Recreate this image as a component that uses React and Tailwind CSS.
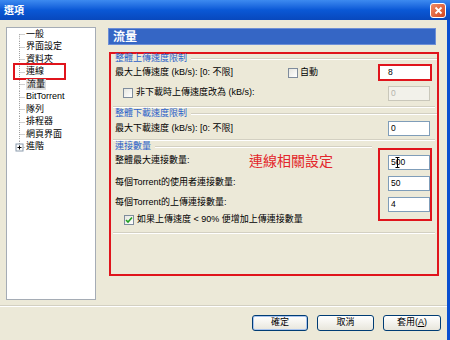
import React from "react";

const treeItems = ["一般", "界面設定", "資料夾", "連線", "流量", "BitTorrent", "隊列", "排程器", "網頁界面", "進階"];

function TreeLine({ first, last, plus }) {
  return (
    <svg width="12" height="12.5" viewBox="0 0 12 12.5" className="shrink-0">
      <line
        x1="6.5"
        y1={first ? 6.25 : 0}
        x2="6.5"
        y2={last ? 6.25 : 12.5}
        stroke="#a0a0a0"
        strokeWidth="1"
        strokeDasharray="1 1"
      />
      <line x1="6.5" y1="6.5" x2="12" y2="6.5" stroke="#a0a0a0" strokeWidth="1" strokeDasharray="1 1" />
      {plus ? (
        <g>
          <rect x="3" y="3" width="7" height="7" fill="#fff" stroke="#8c9cad" />
          <line x1="4.5" y1="6.5" x2="8.5" y2="6.5" stroke="#000" />
          <line x1="6.5" y1="4.5" x2="6.5" y2="8.5" stroke="#000" />
        </g>
      ) : null}
    </svg>
  );
}

function Checkbox({ checked }) {
  return (
    <span className="flex h-[10px] w-[10px] shrink-0 items-center justify-center border border-[#7f8c9c] bg-gradient-to-br from-[#e6e6e0] to-white">
      {checked ? (
        <svg width="8" height="8" viewBox="0 0 8 8">
          <path d="M1 4 L3 6 L7 1.5" fill="none" stroke="#21a121" strokeWidth="1.6" />
        </svg>
      ) : null}
    </span>
  );
}

function Field({ value, disabled, children }) {
  return (
    <div
      className={`relative flex h-[15px] w-[42px] items-center border pl-[2px] text-[8.5px] ${
        disabled ? "border-[#c9c7ba] bg-[#f2f1ea] text-[#b5b4ac]" : "border-[#7f9db9] bg-white text-black"
      }`}
    >
      {value}
      {children}
    </div>
  );
}

function Heading({ text }) {
  return (
    <div className="flex h-[9px] items-center gap-[4px]">
      <span className="leading-[9px] text-[#2a5fc9]">{text}</span>
      <span className="h-[2px] flex-1 border-t border-b border-t-[#d3d0c2] border-b-white" />
    </div>
  );
}

function Separator() {
  return <div className="h-[2px] border-t border-b border-t-[#d3d0c2] border-b-white" />;
}

export default function App() {
  return (
    <div className="flex h-[340px] w-[450px] flex-col overflow-hidden font-['Liberation_Sans','Noto_Sans_CJK_TC',sans-serif] text-[9px] text-black">
      {/* title bar */}
      <div className="flex h-[20px] shrink-0 items-center justify-between bg-gradient-to-b from-[#3d8af0] via-[#0a58d6] to-[#0848bd] pl-[4px] pr-[4px]">
        <span className="text-[10px] font-bold text-white">選項</span>
        <div className="flex h-[15px] w-[16px] items-center justify-center rounded-[3px] border border-white bg-gradient-to-br from-[#f08a64] to-[#d2451d]">
          <svg width="9" height="9" viewBox="0 0 9 9">
            <path d="M1.5 1.5 L7.5 7.5 M7.5 1.5 L1.5 7.5" stroke="#fff" strokeWidth="1.8" />
          </svg>
        </div>
      </div>

      <div className="flex flex-1 flex-col border-r-[3px] border-r-[#0a4fd0] bg-[#ece9d8]">
        <div className="flex pl-[6px] pt-[7px]">
          {/* tree */}
          <div className="h-[273px] w-[90px] border border-[#a5acb5] bg-white pl-[6px]">
            {treeItems.map((item, i) => (
              <div key={item} className="flex h-[12.5px] items-center">
                <TreeLine first={i === 0} last={i === treeItems.length - 1} plus={item === "進階"} />
                <span
                  className={`relative ml-[1px] whitespace-nowrap leading-[11px] ${
                    item === "流量" ? "bg-[#dedede] px-[1px]" : ""
                  }`}
                >
                  {item}
                  {item === "連線" ? (
                    <span className="absolute -left-[13px] -top-[3px] h-[17px] w-[53px] border-2 border-[#e0141c]" />
                  ) : null}
                </span>
              </div>
            ))}
          </div>

          {/* right panel */}
          <div className="ml-[12px] w-[331px]">
            <div className="mt-[1px] flex h-[17px] w-[328px] items-center border border-[#6d8fd6] bg-[#3566c5] pl-[4px]">
              <span className="text-[12px] font-bold leading-[14px] text-white">流量</span>
            </div>

            <div className="ml-[1px] mt-[7px] flex h-[224px] w-[330px] flex-col border-2 border-[#e0141c] pl-[4px]">
              <Heading text="整體上傳速度限制" />
              <div className="mt-[1px] flex h-[17px] items-center pr-[5px]">
                <span className="w-[173px] shrink-0">最大上傳速度 (kB/s): [0: 不限]</span>
                <Checkbox />
                <span className="ml-[2px]">自動</span>
                <div className="ml-auto flex h-[17px] w-[54px] items-center border-2 border-[#e0141c] bg-white pl-[8px] text-[8.5px]">
                  8
                </div>
              </div>
              <div className="mt-[4px] flex h-[16px] items-center pl-[8px] pr-[7px]">
                <Checkbox />
                <span className="ml-[3px]">非下載時上傳速度改為 (kB/s):</span>
                <div className="ml-auto">
                  <Field value="0" disabled />
                </div>
              </div>

              <div className="mt-[5px] -ml-[2px] mr-[2px]">
                <Separator />
              </div>
              <div className="mt-[1px]">
                <Heading text="整體下載速度限制" />
              </div>
              <div className="mt-[3px] flex h-[15px] items-center pr-[7px]">
                <span>最大下載速度 (kB/s): [0: 不限]</span>
                <div className="ml-auto">
                  <Field value="0" />
                </div>
              </div>

              <div className="mt-[3px] -ml-[2px] mr-[2px]">
                <Separator />
              </div>

              <div className="mt-[1px] flex pr-[5px]">
                <div className="flex flex-1 flex-col">
                  <Heading text="連接數量" />
                  <div className="flex h-[20px] items-center">
                    <span className="w-[134px] shrink-0">整體最大連接數量:</span>
                    <span className="text-[14px] leading-[20px] text-[#e3262b]">連線相關設定</span>
                  </div>
                  <div className="mt-[6px] flex h-[12px] items-center">每個Torrent的使用者連接數量:</div>
                  <div className="mt-[8px] flex h-[12px] items-center">每個Torrent的上傳連接數量:</div>
                  <div className="mt-[5px] flex h-[12px] items-center pl-[9px]">
                    <Checkbox checked />
                    <span className="ml-[3px]">如果上傳速度 &lt; 90% 便增加上傳連接數量</span>
                  </div>
                </div>
                <div className="ml-[6px] mt-[6px] flex h-[73px] w-[54px] flex-col gap-[6px] border-2 border-[#e0141c] pl-[8px] pt-[5px]">
                  <Field value="500">
                    <svg
                      width="5"
                      height="11"
                      viewBox="0 0 5 11"
                      className="absolute left-[6px] top-[1px]"
                    >
                      <path d="M0.5 0.5 H4.5 M2.5 0.5 V10.5 M0.5 10.5 H4.5" stroke="#000" strokeWidth="1" fill="none" />
                    </svg>
                  </Field>
                  <Field value="50" />
                  <Field value="4" />
                </div>
              </div>

              <div className="mt-[6px] -ml-[2px] mr-[2px]">
                <Separator />
              </div>
            </div>
          </div>
        </div>

        <div className="mt-[5px]">
          <Separator />
        </div>

        <div className="mt-[8px] flex justify-end gap-[9px] pr-[6px]">
          <button className="flex h-[16px] w-[56px] items-center justify-center rounded-[3px] border border-[#003c74] bg-gradient-to-b from-white to-[#e8e6dc] shadow-[inset_0_0_0_1px_#a9c4ef] text-[9px]">
            確定
          </button>
          <button className="flex h-[16px] w-[57px] items-center justify-center rounded-[3px] border border-[#003c74] bg-gradient-to-b from-white to-[#e8e6dc] text-[9px]">
            取消
          </button>
          <button className="flex h-[16px] w-[58px] items-center justify-center rounded-[3px] border border-[#003c74] bg-gradient-to-b from-white to-[#e8e6dc] text-[9px]">
            套用(<span className="underline">A</span>)
          </button>
        </div>
      </div>
    </div>
  );
}
